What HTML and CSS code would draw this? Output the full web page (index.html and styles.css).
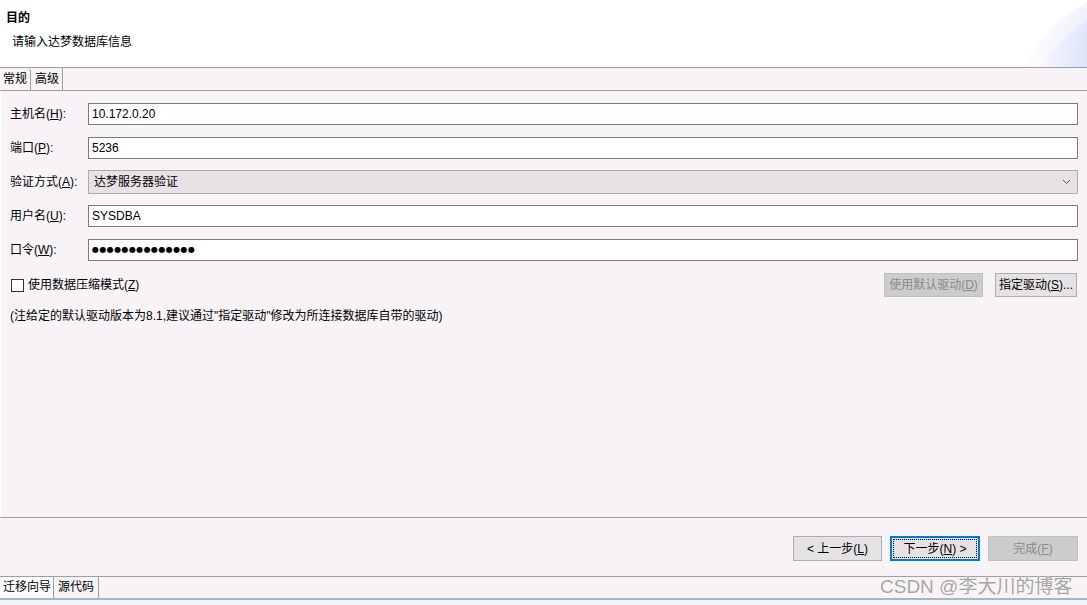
FILE: index.html
```html
<!DOCTYPE html>
<html lang="zh-CN">
<head>
<meta charset="utf-8">
<title>目的</title>
<link rel="stylesheet" href="styles.css">
</head>
<body>
<div class="app">
  <header class="header">
    <div class="title">目的</div>
    <div class="subtitle">请输入达梦数据库信息</div>
  </header>

  <nav class="tabbar">
    <div class="tab tab-active">常规</div>
    <div class="tab tab-second">高级</div>
  </nav>

  <main class="content">
    <div class="form">
      <label class="lbl">主机名(<u>H</u>):</label>
      <div class="field">10.172.0.20</div>

      <label class="lbl">端口(<u>P</u>):</label>
      <div class="field">5236</div>

      <label class="lbl">验证方式(<u>A</u>):</label>
      <div class="select">
        <span class="select-text">达梦服务器验证</span>
        <svg class="chev" width="9" height="6" viewBox="0 0 9 6"><polyline points="1,1 4.5,4.5 8,1" fill="none" stroke="#555" stroke-width="1"/></svg>
      </div>

      <label class="lbl">用户名(<u>U</u>):</label>
      <div class="field">SYSDBA</div>

      <label class="lbl">口令(<u>W</u>):</label>
      <div class="field field-pass">●●●●●●●●●●●●●●</div>

      <div class="opt-row">
        <span class="check"></span>
        <span class="check-label">使用数据压缩模式(<u>Z</u>)</span>
        <span class="spacer"></span>
        <button class="btn btn-disabled btn-default-drv">使用默认驱动(<u>D</u>)</button>
        <button class="btn btn-drv">指定驱动(<u>S</u>)...</button>
      </div>
    </div>
    <p class="note">(注给定的默认驱动版本为8.1,建议通过"指定驱动"修改为所连接数据库自带的驱动)</p>
  </main>

  <footer class="actions">
    <button class="btn btn-nav">&lt; 上一步(<u>L</u>)</button>
    <button class="btn btn-nav btn-focus">下一步(<u>N</u>) &gt;</button>
    <button class="btn btn-nav btn-disabled">完成(<u>F</u>)</button>
  </footer>

  <nav class="bottom-tabs">
    <div class="btab btab-active">迁移向导</div>
    <div class="btab">源代码</div>
  </nav>
  <div class="bottom-rest"></div>

  <div class="watermark">CSDN @李大川的博客</div>
</div>
</body>
</html>
```

FILE: styles.css
```css
html, body {
  margin: 0;
  padding: 0;
}

body {
  width: 1087px;
  height: 605px;
  overflow: hidden;
  background: #f7f3f6;
  color: #000;
  font-family: "Liberation Sans", "Noto Sans CJK SC", sans-serif;
  font-size: 12px;
}

u {
  text-decoration: underline;
  text-underline-offset: 1px;
}

.app {
  position: relative;
  display: flex;
  flex-direction: column;
  height: 605px;
}

/* ---------- header ---------- */
.header {
  height: 67px;
  flex: none;
  border-bottom: 1px solid #a0a0a0;
  background:
    linear-gradient(to right, #ffffff 1015px, rgba(255,255,255,0.5) 1050px, rgba(255,255,255,0) 1087px),
    radial-gradient(circle at 1160px 140px, #d9dffa 0, #e0e5fb 138px, #eceffc 140px, #f2f3fd 154px, #ffffff 157px);
}

.title {
  padding: 10px 0 0 6px;
  line-height: 16px;
  font-weight: bold;
}

.subtitle {
  margin-top: 8px;
  padding-left: 12px;
  line-height: 16px;
}

/* ---------- top tabs ---------- */
.tabbar {
  display: flex;
  height: 22px;
  flex: none;
  border-bottom: 1px solid #a0a0a0;
}

.tab {
  line-height: 22px;
  border-right: 1px solid #a0a0a0;
}

.tab-active {
  padding: 0 3px 0 3px;
  border-top-right-radius: 4px;
}

.tab-second {
  padding: 0 3px 0 4px;
}

/* ---------- content ---------- */
.content {
  height: 426px;
  flex: none;
  box-sizing: border-box;
  padding: 6px 9px 0 10px;
  box-shadow: inset 1px 0 0 #ffffff;
}

.form {
  display: grid;
  grid-template-columns: 78px 1fr;
  grid-auto-rows: 34px;
  align-items: center;
}

.lbl {
  line-height: 16px;
}

.field {
  height: 22px;
  box-sizing: border-box;
  border: 1px solid #7a7a7a;
  background: #ffffff;
  padding-left: 3px;
  line-height: 20px;
}

.field-pass {
  font-family: "DejaVu Sans", sans-serif;
  font-size: 8px;
  letter-spacing: 0.4px;
  line-height: 20px;
}

.select {
  height: 24px;
  box-sizing: border-box;
  border: 1px solid #acacac;
  background: #e6e2e5;
  display: flex;
  align-items: center;
  padding: 0 6px 0 5px;
}

.select-text {
  flex: 1;
  line-height: 16px;
}

.chev {
  display: block;
}

.opt-row {
  grid-column: 1 / 3;
  display: flex;
  align-items: center;
  height: 34px;
  margin-top: 2px;
}

.check {
  width: 13px;
  height: 13px;
  box-sizing: border-box;
  border: 1px solid #333333;
  background: #ffffff;
  margin-left: 1px;
}

.check-label {
  margin-left: 4px;
  line-height: 16px;
}

.spacer {
  flex: 1;
}

.btn {
  font: inherit;
  color: #000;
  box-sizing: border-box;
  border: 1px solid #adadad;
  background: #e4e2e4;
  padding: 0;
  height: 24px;
  line-height: 20px;
  position: relative;
}

.btn-disabled {
  background: #cccccc;
  border-color: #bfbfbf;
  color: #8a8a8a;
}

.btn-default-drv {
  width: 99px;
}

.btn-drv {
  width: 82px;
  margin-left: 12px;
  margin-right: 1px;
}

.note {
  margin: 6px 0 0 0;
  line-height: 18px;
}

/* ---------- bottom actions ---------- */
.actions {
  height: 59px;
  flex: none;
  box-sizing: border-box;
  border-top: 1px solid #a0a0a0;
  display: flex;
  justify-content: flex-end;
  align-items: flex-start;
  gap: 8px;
  padding: 18px 9px 0 0;
}

.btn-nav {
  width: 90px;
  height: 25px;
}

.btn-nav:first-child {
  width: 89px;
}

.btn-focus {
  border: 2px solid #0078d7;
  background: #e4e2e4;
}

.btn-focus::after {
  content: "";
  position: absolute;
  left: 1px;
  top: 1px;
  right: 1px;
  bottom: 1px;
  border: 1px dotted #000;
}

/* ---------- bottom tabs ---------- */
.bottom-tabs {
  display: flex;
  height: 21px;
  flex: none;
  border-top: 1px solid #a0a0a0;
  border-bottom: 2px solid #a2b6cf;
}

.btab {
  line-height: 21px;
  padding: 0 4px 0 4px;
  border-right: 1px solid #a0a0a0;
}

.btab-active {
  background: #ffffff;
  padding: 0 2px 0 3px;
}

.bottom-rest {
  flex: 1;
  background: #f4f4f4;
}

.watermark {
  position: absolute;
  left: 880px;
  top: 577px;
  font-size: 19px;
  line-height: 19px;
  color: #a6a6a6;
  text-shadow: 0 0 1px #ffffff;
  white-space: nowrap;
}
```
